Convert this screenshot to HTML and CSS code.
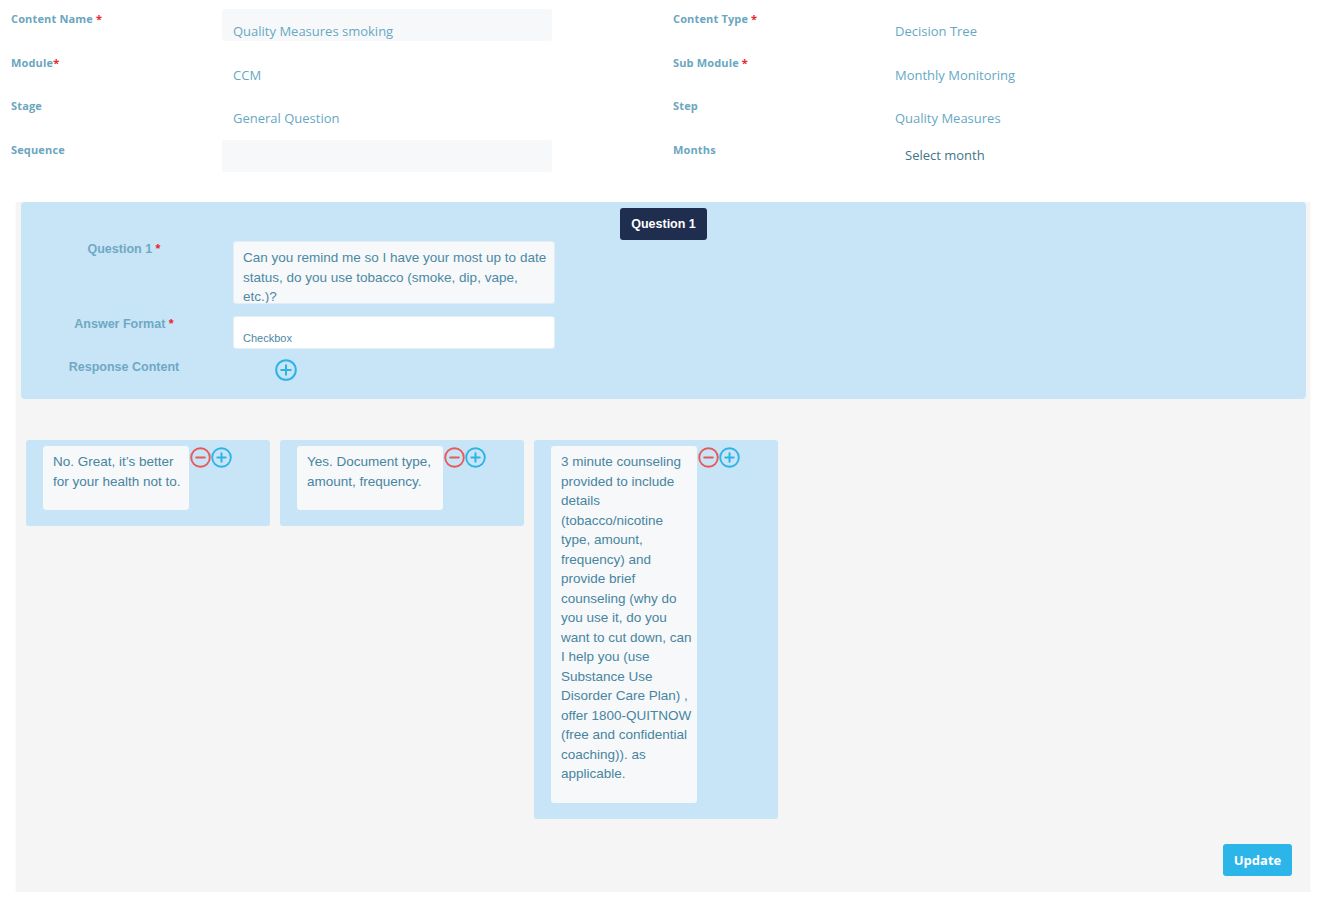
FILE: index.html
```html
<!DOCTYPE html>
<html>
<head>
<meta charset="utf-8">
<link rel="stylesheet" href="styles.css">
</head>
<body>
<div class="top-form">
  <div class="f-label">Content Name <span class="req">*</span></div>
  <div class="f-value f-input">Quality Measures smoking</div>
  <div class="f-label f-label-right">Content Type <span class="req">*</span></div>
  <div class="f-value">Decision Tree</div>

  <div class="f-label">Module<span class="req">*</span></div>
  <div class="f-value">CCM</div>
  <div class="f-label f-label-right">Sub Module <span class="req">*</span></div>
  <div class="f-value">Monthly Monitoring</div>

  <div class="f-label">Stage</div>
  <div class="f-value">General Question</div>
  <div class="f-label f-label-right">Step</div>
  <div class="f-value">Quality Measures</div>

  <div class="f-label">Sequence</div>
  <div class="f-value f-input"></div>
  <div class="f-label f-label-right">Months</div>
  <div class="f-value f-select">Select month</div>
</div>

<div class="editor">
  <div class="question-panel">
    <div class="badge-row"><span class="badge">Question 1</span></div>
    <div class="q-grid">
      <div class="q-label">Question 1 <span class="req">*</span></div>
      <div class="q-textarea">Can you remind me so I have your most up to date status, do you use tobacco (smoke, dip, vape, etc.)?</div>
      <div class="q-label q-row2">Answer Format <span class="req">*</span></div>
      <div class="q-input q-row2">Checkbox</div>
      <div class="q-label q-row3">Response Content</div>
      <div class="q-row3 q-add">
        <svg class="ic" width="22" height="22" viewBox="0 0 22 22"><circle cx="11" cy="11" r="9.8" fill="none" stroke="#2cb4e6" stroke-width="2"/><path d="M11 6.2v9.6M6.2 11h9.6" stroke="#2cb4e6" stroke-width="2" stroke-linecap="round"/></svg>
      </div>
    </div>
  </div>

  <div class="answers">
    <div class="card">
      <div class="card-text">No. Great, it’s better for your health not to.</div>
      <div class="card-icons">
        <svg width="21" height="21" viewBox="0 0 21 21"><circle cx="10.5" cy="10.5" r="9.3" fill="none" stroke="#e85a57" stroke-width="1.9"/><path d="M6.3 10.5h8.4" stroke="#e85a57" stroke-width="2.2" stroke-linecap="round"/></svg>
        <svg width="21" height="21" viewBox="0 0 21 21"><circle cx="10.5" cy="10.5" r="9.3" fill="none" stroke="#2cb4e6" stroke-width="1.9"/><path d="M10.5 6.3v8.4M6.3 10.5h8.4" stroke="#2cb4e6" stroke-width="2" stroke-linecap="round"/></svg>
      </div>
    </div>
    <div class="card">
      <div class="card-text">Yes. Document type, amount, frequency.</div>
      <div class="card-icons">
        <svg width="21" height="21" viewBox="0 0 21 21"><circle cx="10.5" cy="10.5" r="9.3" fill="none" stroke="#e85a57" stroke-width="1.9"/><path d="M6.3 10.5h8.4" stroke="#e85a57" stroke-width="2.2" stroke-linecap="round"/></svg>
        <svg width="21" height="21" viewBox="0 0 21 21"><circle cx="10.5" cy="10.5" r="9.3" fill="none" stroke="#2cb4e6" stroke-width="1.9"/><path d="M10.5 6.3v8.4M6.3 10.5h8.4" stroke="#2cb4e6" stroke-width="2" stroke-linecap="round"/></svg>
      </div>
    </div>
    <div class="card">
      <div class="card-text">3 minute counseling provided to include details (tobacco/nicotine type, amount, frequency) and provide brief counseling (why do you use it, do you want to cut down, can I help you (use Substance Use Disorder Care Plan) , offer 1800-QUITNOW (free and confidential coaching)). as applicable.</div>
      <div class="card-icons">
        <svg width="21" height="21" viewBox="0 0 21 21"><circle cx="10.5" cy="10.5" r="9.3" fill="none" stroke="#e85a57" stroke-width="1.9"/><path d="M6.3 10.5h8.4" stroke="#e85a57" stroke-width="2.2" stroke-linecap="round"/></svg>
        <svg width="21" height="21" viewBox="0 0 21 21"><circle cx="10.5" cy="10.5" r="9.3" fill="none" stroke="#2cb4e6" stroke-width="1.9"/><path d="M10.5 6.3v8.4M6.3 10.5h8.4" stroke="#2cb4e6" stroke-width="2" stroke-linecap="round"/></svg>
      </div>
    </div>
  </div>

  <div class="footer">
    <button class="btn-update">Update</button>
  </div>
</div>
</body>
</html>
```
FILE: styles.css
```css
* { box-sizing: border-box; }
html, body { margin: 0; padding: 0; background: #ffffff; }
body { font-family: "Open Sans", "Noto Sans", sans-serif; }

.req { color: #e8262c; }

.top-form {
  display: grid;
  grid-template-columns: 211px 330px 332px 1fr;
  grid-auto-rows: 43.5px;
  padding: 9px 0 0 11px;
}
.f-label-right { margin-left: 121px; }

.f-label {
  padding-top: 3px;
  font-size: 11px;
  line-height: 14px;
  font-weight: 700;
  color: #6ba6c0;
  letter-spacing: 0.15px;
  white-space: nowrap;
}
.f-value {
  height: 32px;
  padding: 13px 11px 0;
  font-size: 13px;
  line-height: 18px;
  color: #66a8c4;
}
.f-input {
  background: #f7f8fa;
  border-radius: 3px;
}
.f-select {
  padding: 6px 0 0 21px;
  color: #3f7589;
}

.editor {
  margin: 35px 0 0 16px;
  width: 1294px;
  background: #f5f5f5;
  padding: 0 4px 16px 5px;
  box-shadow: 0 1px 2px rgba(0, 0, 0, 0.06);
  font-family: "Liberation Sans", Arial, sans-serif;
}

.question-panel {
  margin-top: -16px;
  background: #c8e4f7;
  border-radius: 4px;
  height: 197px;
  padding-top: 6px;
}
.badge-row { display: flex; justify-content: center; }
.badge {
  display: block;
  width: 87px;
  height: 32px;
  line-height: 32px;
  text-align: center;
  background: #1f2d4f;
  color: #ffffff;
  font-weight: 700;
  font-size: 12.5px;
  border-radius: 3px;
}

.q-grid {
  display: grid;
  grid-template-columns: 206px 322px;
  column-gap: 6px;
  margin-top: 1px;
}
.q-label {
  text-align: center;
  font-size: 12.5px;
  line-height: 15px;
  padding-top: 1px;
  font-weight: 700;
  color: #6ea9c3;
}
.q-textarea {
  height: 63px;
  overflow: hidden;
  background: #f6f8fa;
  border: 1px solid #e2eef7;
  border-radius: 3px;
  padding: 6px 4px 0 9px;
  font-size: 13.5px;
  line-height: 19.5px;
  color: #4b89a3;
}
.q-row2 { margin-top: 12px; }
.q-input {
  height: 33px;
  background: #ffffff;
  border: 1px solid #e4eef6;
  border-radius: 3px;
  padding: 14px 9px 0;
  font-size: 11px;
  line-height: 14px;
  color: #4b89a3;
}
.q-row3 { margin-top: 10px; }
.q-add { padding-left: 42px; height: 22px; }
.ic { display: block; }

.answers {
  display: flex;
  align-items: flex-start;
  gap: 10px;
  margin-top: 41px;
  padding-left: 5px;
}
.card {
  width: 244px;
  background: #c8e4f7;
  border-radius: 3px;
  padding: 6px 0 16px 17px;
  display: flex;
  align-items: flex-start;
}
.card-text {
  width: 146px;
  background: #f6f8fa;
  border-radius: 3px;
  padding: 6px 2px 19px 10px;
  font-size: 13.5px;
  line-height: 19.5px;
  color: #4785a0;
}
.card-icons {
  display: flex;
  margin-top: 1px;
  margin-left: 1px;
}
.card-icons svg { display: block; }

.footer {
  display: flex;
  justify-content: flex-end;
  margin-top: 25px;
  padding-right: 14px;
}
.btn-update {
  width: 69px;
  height: 32px;
  border: none;
  border-radius: 3px;
  background: #2bb5e8;
  color: #ffffff;
  font-family: "Open Sans", "Noto Sans", sans-serif;
  font-weight: 700;
  font-size: 13px;
  padding: 0;
}
```
